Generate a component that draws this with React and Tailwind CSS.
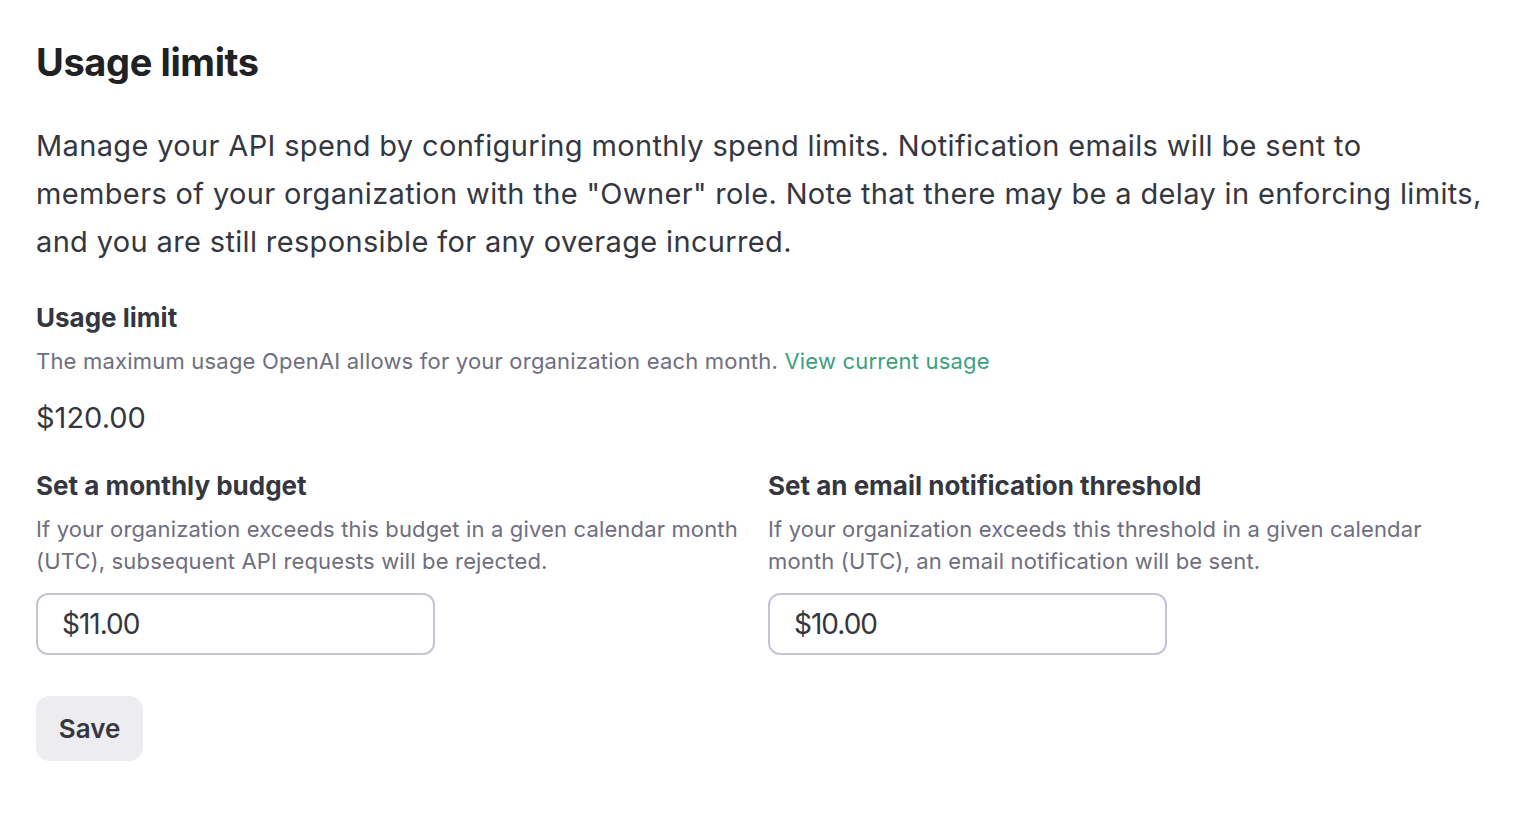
export default function App() {
  return (
    <div className="min-h-screen bg-white px-9 pt-10 font-['Inter','Liberation_Sans',sans-serif] text-[#353740]">
      <h1 className="text-[38px] leading-[44px] font-bold text-[#202123] tracking-[-0.01em]">Usage limits</h1>

      <p className="mt-[38px] whitespace-nowrap text-[29px] leading-[48px] tracking-[0.35px] text-[#353740]">
        Manage your API spend by configuring monthly spend limits. Notification emails will be sent to
        <br />
        members of your organization with the "Owner" role. Note that there may be a delay in enforcing limits,
        <br />
        and you are still responsible for any overage incurred.
      </p>

      <div className="mt-9">
        <h2 className="text-[26px] leading-8 font-bold">Usage limit</h2>
        <p className="mt-[11px] text-[22px] leading-8 tracking-[0.2px] text-[#6e6e80]">
          The maximum usage OpenAI allows for your organization each month.{' '}
          <a href="#" className="text-[#3d9f80]">View current usage</a>
        </p>
        <div className="mt-[23px] text-[29px] leading-9">$120.00</div>
      </div>

      <div className="mt-[34px] grid grid-cols-[712px_1fr] gap-x-5">
        <div>
          <h2 className="text-[26px] leading-8 font-bold">Set a monthly budget</h2>
          <p className="mt-[11px] text-[22px] leading-8 tracking-[0.15px] text-[#6e6e80]">
            If your organization exceeds this budget in a given calendar month
            <br />
            (UTC), subsequent API requests will be rejected.
          </p>
          <input
            defaultValue="$11.00"
            className="mt-4 h-[62px] w-[399px] rounded-xl border-2 border-[#c5c5d2] px-6 text-[28px] tracking-[-1px] text-[#353740] outline-none"
          />
        </div>
        <div>
          <h2 className="text-[26px] leading-8 font-bold">Set an email notification threshold</h2>
          <p className="mt-[11px] text-[22px] leading-8 tracking-[0.15px] text-[#6e6e80]">
            If your organization exceeds this threshold in a given calendar
            <br />
            month (UTC), an email notification will be sent.
          </p>
          <input
            defaultValue="$10.00"
            className="mt-4 h-[62px] w-[399px] rounded-xl border-2 border-[#c5c5d2] px-6 text-[28px] tracking-[-1px] text-[#353740] outline-none"
          />
        </div>
      </div>

      <button className="mt-[41px] h-[65px] w-[107px] rounded-[14px] bg-[#ececf1] text-[26px] font-semibold text-[#353740]">
        Save
      </button>
    </div>
  );
}
